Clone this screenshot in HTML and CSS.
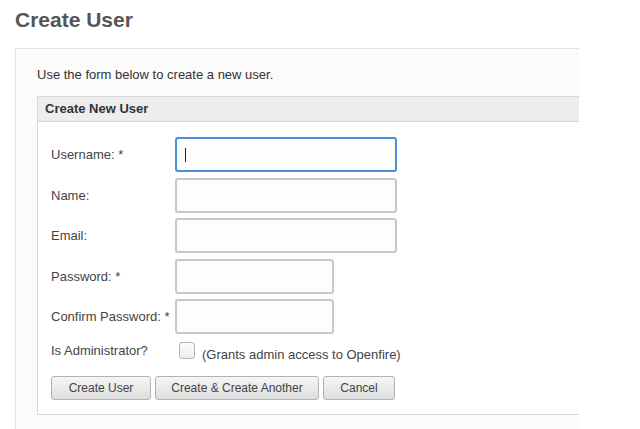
FILE: index.html
```html
<!DOCTYPE html>
<html>
<head>
<meta charset="utf-8">
<link rel="stylesheet" href="styles.css">
</head>
<body>
<h1 class="title">Create User</h1>
<div class="panel">
  <p class="intro">Use the form below to create a new user.</p>
  <div class="box">
    <div class="box-head">Create New User</div>
    <div class="box-body">
      <div class="rows">
        <div class="row"><label class="lbl">Username: *</label><div class="field focus"><span class="caret"></span></div></div>
        <div class="row"><label class="lbl">Name:</label><div class="field"></div></div>
        <div class="row"><label class="lbl">Email:</label><div class="field"></div></div>
        <div class="row"><label class="lbl">Password: *</label><div class="field short"></div></div>
        <div class="row"><label class="lbl">Confirm Password: *</label><div class="field short"></div></div>
      </div>
      <div class="admin">
        <span class="lbl admin-lbl">Is Administrator?</span>
        <span class="check"></span>
        <span class="grant">(Grants admin access to Openfire)</span>
      </div>
      <div class="buttons">
        <button class="btn b1">Create User</button>
        <button class="btn b2">Create &amp; Create Another</button>
        <button class="btn b3">Cancel</button>
      </div>
    </div>
  </div>
</div>
</body>
</html>
```
FILE: styles.css
```css
html, body {
  margin: 0;
  padding: 0;
  background: #ffffff;
  font-family: "Liberation Sans", Arial, sans-serif;
  color: #444;
  overflow: hidden;
  height: 429px;
}
.title {
  margin: 0;
  padding: 8px 0 0 15px;
  height: 48px;
  box-sizing: border-box;
  font-size: 21px;
  line-height: 24px;
  font-weight: bold;
  color: #555;
}
.panel {
  margin-left: 15px;
  width: 564px;
  height: 400px;
  box-sizing: border-box;
  background: #fbfbfb;
  border-top: 1px solid #e2e2e2;
  border-left: 1px solid #e2e2e2;
  padding: 18px 0 0 21px;
}
.intro {
  margin: 0;
  font-size: 13px;
  line-height: 15px;
  color: #333;
  height: 29px;
}
.box {
  border: 1px solid #d8d8d8;
  border-right: none;
  background: #fff;
  height: 319px;
  box-sizing: border-box;
}
.box-head {
  height: 25px;
  box-sizing: border-box;
  background: #ededed;
  border-bottom: 1px solid #d6d6d6;
  font-size: 13px;
  font-weight: bold;
  color: #333;
  line-height: 23px;
  padding-left: 7px;
}
.box-body {
  padding: 15px 0 0 13px;
}
.rows {
  display: flex;
  flex-direction: column;
  gap: 5.6px;
}
.row {
  display: flex;
  align-items: center;
  height: 35px;
}
.lbl {
  width: 124px;
  font-size: 13px;
  color: #444;
  flex: none;
}
.field {
  width: 222px;
  height: 35px;
  box-sizing: border-box;
  border: 2px solid #c8c8c5;
  border-radius: 3px;
  background: #fdfdfd;
  position: relative;
}
.field.short {
  width: 159px;
}
.field.focus {
  border-color: #4a90d9;
}
.caret {
  position: absolute;
  left: 8px;
  top: 9px;
  width: 1px;
  height: 14px;
  background: #222;
}
.admin {
  display: flex;
  align-items: flex-start;
  height: 42px;
  padding-top: 8px;
  box-sizing: border-box;
}
.admin-lbl {
  padding-top: 1px;
}
.check {
  width: 16px;
  height: 17px;
  box-sizing: border-box;
  border: 1px solid #b5b5b5;
  border-radius: 3px;
  background: linear-gradient(#fdfdfd, #ececec);
  margin-left: 4px;
  flex: none;
}
.grant {
  font-size: 13px;
  color: #444;
  margin-left: 7px;
  padding-top: 5px;
}
.buttons {
  display: flex;
  gap: 4px;
}
.btn {
  height: 24px;
  box-sizing: border-box;
  border: 1px solid #b2b2b2;
  border-radius: 3px;
  background: linear-gradient(#f6f6f6, #dedede);
  font-family: "Liberation Sans", Arial, sans-serif;
  font-size: 12px;
  color: #444;
  padding: 0;
  margin: 0;
}
.b1 { width: 100px; }
.b2 { width: 164px; }
.b3 { width: 72px; }
```
